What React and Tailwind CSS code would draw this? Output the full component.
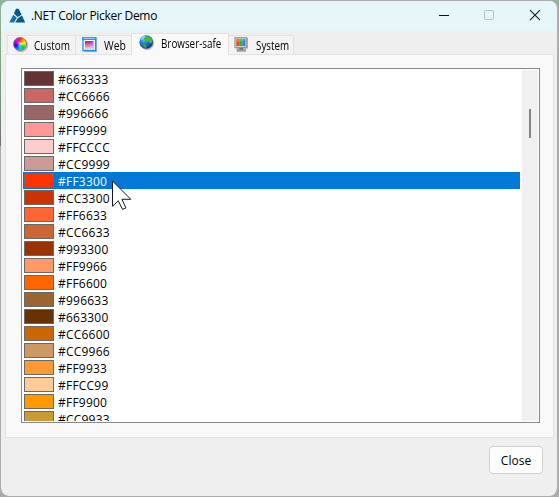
import React from "react";

const COLORS = [
  "#663333", "#CC6666", "#996666", "#FF9999", "#FFCCCC", "#CC9999", "#FF3300",
  "#CC3300", "#FF6633", "#CC6633", "#993300", "#FF9966", "#FF6600", "#996633",
  "#663300", "#CC6600", "#CC9966", "#FF9933", "#FFCC99", "#FF9900", "#CC9933",
];

function Logo() {
  return (
    <svg width="17" height="16" viewBox="0 0 17 16" className="shrink-0">
      <path d="M7 .8h2.7L12.6 6.8 8.6 9 4.9 5.6z" fill="#075985" />
      <path d="M4.3 6.8l3.6 3L5 14.4H.3z" fill="#1673a4" />
      <path d="M13 7.6l3.2 6.8H6.2L9 10z" fill="#075985" />
    </svg>
  );
}

function WheelIcon() {
  return (
    <span className="relative block size-4 shrink-0">
      <span className="block size-[14px] rounded-full border border-[#777] bg-[conic-gradient(#ff2020,#ff9000_35deg,#fff000_75deg,#80f000_105deg,#00d020_135deg,#00e0d0_175deg,#0080ff_210deg,#2000ff_245deg,#a000f0_285deg,#ff00d0_315deg,#ff2020)] shadow-[1px_1px_1px_#aaa]" />
      <span className="absolute left-[5px] top-[5px] size-1 rounded-full bg-white/70 blur-[1px]" />
    </span>
  );
}

function WebIcon() {
  return (
    <svg width="16" height="16" viewBox="0 0 16 16" className="shrink-0">
      <defs>
        <linearGradient id="webH">
          <stop offset="0" stopColor="#a52018" />
          <stop offset=".5" stopColor="#b010a0" />
          <stop offset="1" stopColor="#a040f0" />
        </linearGradient>
        <linearGradient id="webV" x1="0" y1="0" x2="0" y2="1">
          <stop offset="0" stopColor="#fff" stopOpacity="0" />
          <stop offset="1" stopColor="#fff8e0" stopOpacity=".85" />
        </linearGradient>
      </defs>
      <path d="M2 14.6h12.6V3" stroke="#aaa" fill="none" />
      <path d="M1 .8h12.6v12.7H1z" fill="#f4faff" stroke="#1593ef" strokeWidth="1.3" />
      <path d="M0 0h14.5v3H0z" fill="#159bf5" />
      <path d="M1.5 1.4h11.5" stroke="#a8dcff" strokeWidth=".9" />
      <path d="M3 4h8.5v8H3z" fill="url(#webH)" />
      <path d="M3 4h8.5v8H3z" fill="url(#webV)" />
    </svg>
  );
}

function GlobeIcon() {
  return (
    <svg width="16" height="16" viewBox="0 0 16 16" className="shrink-0">
      <defs>
        <radialGradient id="sea" cx=".35" cy=".3" r=".75">
          <stop offset="0" stopColor="#70c8ff" />
          <stop offset=".45" stopColor="#1478d8" />
          <stop offset="1" stopColor="#063878" />
        </radialGradient>
      </defs>
      <circle cx="8" cy="8" r="7" fill="#888" opacity=".6" />
      <circle cx="7.2" cy="7" r="6.8" fill="url(#sea)" />
      <path d="M5 3C6.2 1.6 8.8.9 11 2l2 2.3.3 2.4-1 1.8-1.6-.4-1.2-1.8-2.2-.1L6 7.3 5 5.6z" fill="#4cb63a" />
      <path d="M3 9.2l2.8-.2 2 1.6-.7 2.3C5 12.9 3.6 11.5 3 9.2z" fill="#35a048" />
      <path d="M2 4.8C3 3 4.3 2 6 1.4" stroke="#a5e4f5" strokeWidth="1.2" fill="none" />
    </svg>
  );
}

function MonitorIcon() {
  return (
    <svg width="16" height="16" viewBox="0 0 16 16" className="shrink-0">
      <path d="M2 1h11.6v10.5H2z" fill="#888" />
      <path d="M.8.4h12v10.2H.8z" fill="#cfcfcf" stroke="#858585" strokeWidth=".8" />
      <path d="M2.3 1.7h3v7.4h-3z" fill="#ee4b15" />
      <path d="M5.3 1.7h3.2v7.4H5.3z" fill="#29bb24" />
      <path d="M8.5 1.7h2.9v7.4H8.5z" fill="#168df0" />
      <path d="M2.3 1.7h9.1v1.6l-9.1 1.9z" fill="#fff" opacity=".2" />
      <path d="M5.4 11h3.8v2H5.4z" fill="#777" />
      <path d="M3 12.6h8.6v1.6H3z" fill="#aaa" stroke="#777" strokeWidth=".6" />
    </svg>
  );
}

function Cursor() {
  return (
    <svg width="20" height="32" viewBox="0 0 20 32" className="absolute left-[112px] top-[180px] z-10">
      <path d="M.5 1v25.3l5.8-5.5 4.2 8.6 3.4-1.6-4-8.5h8.9z" fill="#fff" stroke="#111827" strokeWidth="1" />
    </svg>
  );
}

export default function App() {
  return (
    <div className="relative h-[497px] w-[559px] overflow-hidden bg-[linear-gradient(to_bottom,#8fb59a_0,#4f9d58_60px,#3f7746_105px,#333_145px,#aaa_147px,#aaa_100%)] font-['Open_Sans',sans-serif] text-[12px] text-black">
      <div className="flex h-full flex-col overflow-hidden rounded-[9px] border border-r-2 border-[#acacac] border-l-[#acacac]/50 bg-[#efefef] bg-clip-padding">
        <header className="flex h-[30px] shrink-0 items-center bg-[#e5f7fa] pl-2">
          <Logo />
          <span className="ml-[5px] whitespace-nowrap leading-[28px] tracking-[-0.29px]">.NET Color Picker Demo</span>
          <svg width="110" height="30" viewBox="0 0 110 30" fill="none" className="ml-auto mr-[12px]">
            <path d="M4 14.5h10" stroke="#111" />
            <rect x="49.5" y="9.5" width="9" height="9" rx="1" stroke="#b3c2c4" />
            <path d="M95 9.2l10 10M105 9.2l-10 10" stroke="#222" strokeWidth="1.2" />
          </svg>
        </header>

        <nav className="relative z-1 mt-[2px] flex h-[22px] shrink-0 items-end pl-[6px] text-[12px]">
          <div className="mb-px flex h-[19px] w-[69px] items-center border border-b-0 border-[#e2e2e2] bg-[#f3f3f3] pl-[5px]">
            <WheelIcon />
            <span className="ml-[5px] origin-left pt-px scale-x-[.83]">Custom</span>
          </div>
          <div className="mb-px flex h-[19px] w-[55px] items-center border-t border-[#e2e2e2] bg-[#f3f3f3] pl-[6px]">
            <WebIcon />
            <span className="ml-[6px] origin-left pt-px scale-x-[.87]">Web</span>
          </div>
          <div className="flex h-[22px] w-[98px] items-center border border-b-0 border-[#e2e2e2] bg-[#f9f9f9] pb-[3px] pl-[7px]">
            <GlobeIcon />
            <span className="ml-[6px] origin-left whitespace-nowrap pt-0.5 scale-x-[.82]">Browser-safe</span>
          </div>
          <div className="mb-px flex h-[19px] w-[65px] items-center border border-b-0 border-l-0 border-[#e2e2e2] bg-[#f3f3f3] pl-[5px]">
            <MonitorIcon />
            <span className="ml-[6px] origin-left pt-px scale-x-[.82]">System</span>
          </div>
        </nav>

        <main className="-mt-px ml-1 flex h-[384px] w-[549px] shrink-0 border border-[#e2e2e2] bg-[#f9f9f9] pl-[15px] pt-[13px]">
          <div className="flex h-[355px] w-[519px] border border-[#828790] bg-white p-px">
            <ul className="h-[351px] w-[499px] overflow-hidden">
              {COLORS.map((color) => (
                <li
                  key={color}
                  className={`flex h-[17px] w-[497px] items-center pl-px ${color === "#FF3300" ? "bg-[#0078d7] text-white" : ""}`}
                >
                  <span className="h-[15px] w-[30px] border border-[#696969]" style={{ backgroundColor: color }} />
                  <span className="ml-1 pt-px leading-[17px] tracking-[0.22px]">{color}</span>
                </li>
              ))}
            </ul>
            <div className="flex w-4 justify-center bg-[#f0f0f0] pt-[39px]">
              <div className="h-[29px] w-[2px] bg-[#858585]" />
            </div>
          </div>
        </main>

        <footer className="flex justify-end pr-[14px] pt-2">
          <button className="h-7 w-[54px] rounded-[4px] border border-[#d0d0d0] bg-[#fdfdfd] pt-px text-[12px]">Close</button>
        </footer>
      </div>
      <Cursor />
    </div>
  );
}
